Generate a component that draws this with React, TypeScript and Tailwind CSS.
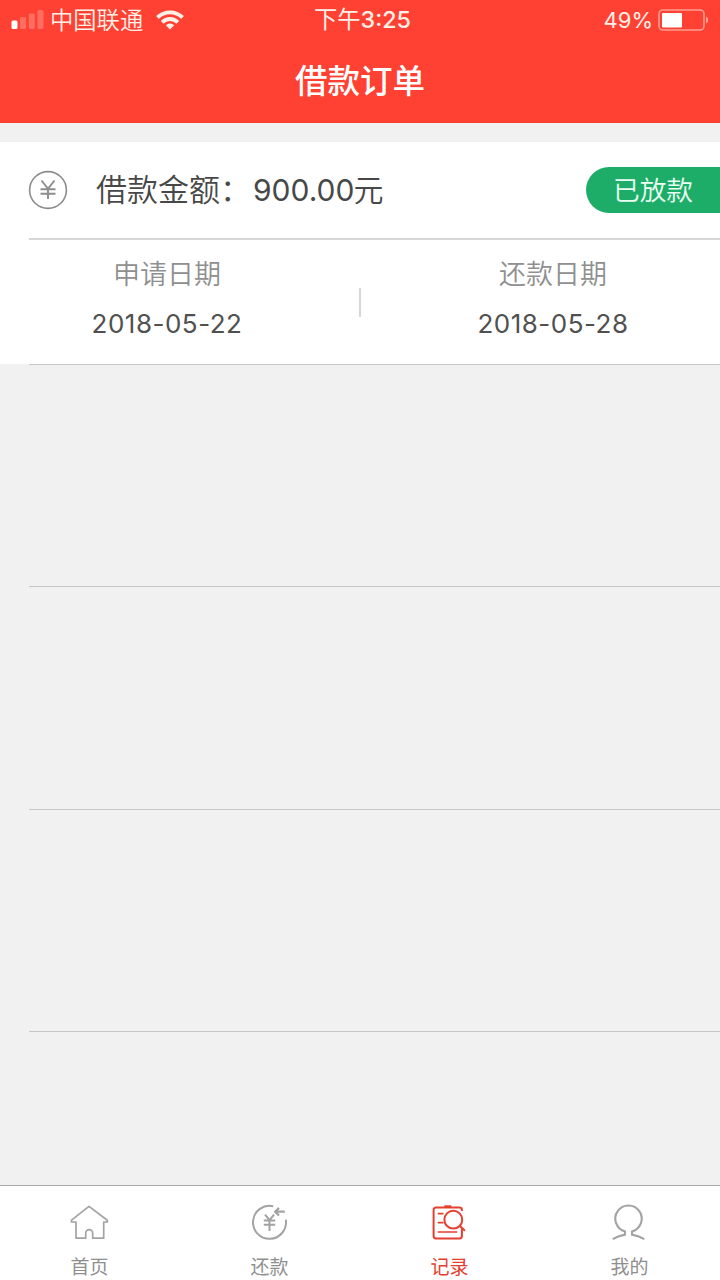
import React from "react";
import clsx from "clsx";

const tabs = [
  { label: "首页", icon: <HomeIcon /> },
  { label: "还款", icon: <RepayIcon /> },
  { label: "记录", icon: <RecordIcon />, active: true },
  { label: "我的", icon: <UserIcon /> },
];

function HomeIcon() {
  return (
    <svg className="shrink-0" width="40" height="40" viewBox="0 0 40 40" fill="none" stroke="currentColor" strokeWidth="1.7" strokeLinejoin="round">
      <path d="M19 3.4 1.5 17.2V19H6v16.2h9.7v-5a3.5 3.5 0 0 1 7 0v5h11V19h3.6v-1.8L19 3.4Z" />
    </svg>
  );
}

function RepayIcon() {
  return (
    <svg className="shrink-0" width="40" height="40" viewBox="0 0 40 40" fill="none" stroke="currentColor" strokeWidth="2">
      <path d="M23.2 3.2A16.5 16.5 0 1 0 35.8 16.6" />
      <path d="M34.8 8.7h-9.2M29 4.9l-3.8 3.8 3.8 3.8" strokeWidth="2.3" />
      <path d="m15 11.6 4.5 5.6 4.5-5.6M13.8 17.4h11.4M13.8 21.8h11.4M19.5 17.2V28" />
    </svg>
  );
}

function RecordIcon() {
  return (
    <svg className="shrink-0" width="40" height="40" viewBox="0 0 40 40" fill="none" stroke="currentColor" strokeWidth="2">
      <path d="M31.9 8V7a2.4 2.4 0 0 0-2.4-2.4H6A2.4 2.4 0 0 0 3.6 7v26A2.4 2.4 0 0 0 6 35.4h23.5a2.4 2.4 0 0 0 2.4-2.4v-7.6" />
      <path d="M14.3 3.6h7" strokeWidth="2.6" />
      <circle cx="23.3" cy="16.7" r="8.9" />
      <path d="m29.7 22.8 5.2 5" />
      <path d="M7.7 10.7h5.8M7.7 19.7h5.8M7.7 29h19.6" strokeWidth="1.7" />
    </svg>
  );
}

function UserIcon() {
  return (
    <svg className="shrink-0" width="40" height="40" viewBox="0 0 40 40" fill="none" stroke="currentColor" strokeWidth="2.1">
      <path d="M2.7 36.2c3.2-2 7.5-3.6 12.3-4.6v-3.2a13.2 13.2 0 1 1 7 0v3.2c4.8 1 9.1 2.6 12.3 4.6" />
    </svg>
  );
}

function StatusBar() {
  return (
    <div className="grid h-10 grid-cols-3 items-center text-[22px] leading-10 text-[#fff0e8]">
      <div className="flex items-center pl-[11px]">
        <svg width="33" height="20" viewBox="0 0 33 20" fill="currentColor">
          <rect x="0.5" y="10.5" width="6" height="8.5" rx="1.5" fill="#fff" />
          <g opacity="0.25">
            <rect x="9" y="7" width="6" height="12" rx="1.5" />
            <rect x="17.8" y="3.5" width="6" height="15.5" rx="1.5" />
            <rect x="26.5" y="0" width="6" height="19" rx="1.5" />
          </g>
        </svg>
        <span className="ml-[6px] pt-px text-[23.3px] leading-[39px] font-[350]">中国联通</span>
        <svg className="ml-[13px]" width="28" height="20" viewBox="0 0 28 20" fill="none" stroke="currentColor" strokeWidth="3.9">
          <path d="M1.5 7.5a17.7 17.7 0 0 1 25 0" />
          <path d="M6.2 12.3a11 11 0 0 1 15.6 0" />
          <path d="M14 19.5 9.8 15.3a6 6 0 0 1 8.4 0Z" fill="currentColor" stroke="none" />
        </svg>
      </div>
      <p className="pl-[5px] text-center text-[23.3px]">
        下午<span className="font-medium">3:25</span>
      </p>
      <div className="flex items-center justify-end pr-[11px]">
        <span>49%</span>
        <svg className="ml-[5px]" width="51" height="22" viewBox="0 0 51 22" fill="none">
          <rect x="1" y="1" width="45" height="20" rx="4" stroke="#ff9f92" strokeWidth="1.6" />
          <rect x="4" y="4" width="20" height="14.5" rx="1" fill="#fff" />
          <path d="M48 7.5c2.8 1 2.8 6 0 7Z" fill="#ff9f92" />
        </svg>
      </div>
    </div>
  );
}

function DateCell({ title, date }: { title: string; date: string }) {
  return (
    <div className="w-[334px] text-center">
      <p className="mt-[15px] text-[27px] leading-[40px] font-[350] text-[#8f8f8f]">{title}</p>
      <p className="mt-[9px] text-[26px] leading-10 tracking-[0.5px] text-[#505050]">{date}</p>
    </div>
  );
}

export default function App() {
  return (
    <div className="flex h-[1280px] w-[720px] flex-col overflow-hidden bg-[#f1f1f1] font-[Inter,'Noto_Sans_CJK_SC',sans-serif]">
      <header className="h-[123px] shrink-0 bg-[#ff4133]">
        <StatusBar />
        <h1 className="pt-px text-center text-[32.5px] leading-[81px] font-medium text-white">借款订单</h1>
      </header>

      <main className="mt-[19px] flex-1">
        <section className="flex h-[222px] flex-col bg-white">
          <div className="flex h-24 items-center">
            <svg className="ml-7" width="40" height="40" viewBox="0 0 40 40" fill="none" stroke="#8c8c8c" strokeWidth="1.6">
              <circle cx="20" cy="20" r="18.4" />
              <path d="m13.5 10.5 6.5 8.3 6.5-8.3M12.5 19.2h15M12.5 23.8h15M20 18.8V29" strokeWidth="1.9" />
            </svg>
            <p className="ml-7 flex items-baseline pt-px text-[30px] text-[#484848]">
              <span className="text-[31px] font-[350]">借款金额：</span>
              <span className="ml-[2px]">900.00</span>
              <span className="-ml-px text-[30px] font-[350]">元</span>
            </p>
            <span className="ml-auto h-[46px] w-[134px] rounded-l-full bg-[#1dad69] pl-[27px] text-[26.7px] leading-[46px] font-[350] text-[#e9fff2]">
              已放款
            </span>
          </div>
          <div className="ml-[29px] h-[2px] bg-[#d7d7d7]" />
          <div className="flex">
            <DateCell title="申请日期" date="2018-05-22" />
            <div className="mx-[25px] mt-12 h-[29px] w-[2px] bg-[#d7d7d7]" />
            <DateCell title="还款日期" date="2018-05-28" />
          </div>
        </section>
        <div className="ml-[29px] h-[668px] divide-y divide-[#c6c6c6] border-y border-[#c6c6c6]">
          <div className="h-[222px]" />
          <div className="h-[223px]" />
          <div className="h-[221px]" />
        </div>
      </main>

      <nav className="flex h-[95px] shrink-0 border-t border-[#a9a9a9] bg-white">
        {tabs.map((tab) => (
          <div
            key={tab.label}
            className={clsx(
              "flex flex-1 flex-col items-center pt-[17px]",
              tab.active ? "text-[#e5402f]" : "text-[#a3a3a3]"
            )}
          >
            {tab.icon}
            <span
              className={clsx(
                "mt-[13px] mr-px text-[19px] leading-6",
                tab.active ? "text-[#e5402f]" : "text-[#8f8f8f]"
              )}
            >
              {tab.label}
            </span>
          </div>
        ))}
      </nav>
    </div>
  );
}
